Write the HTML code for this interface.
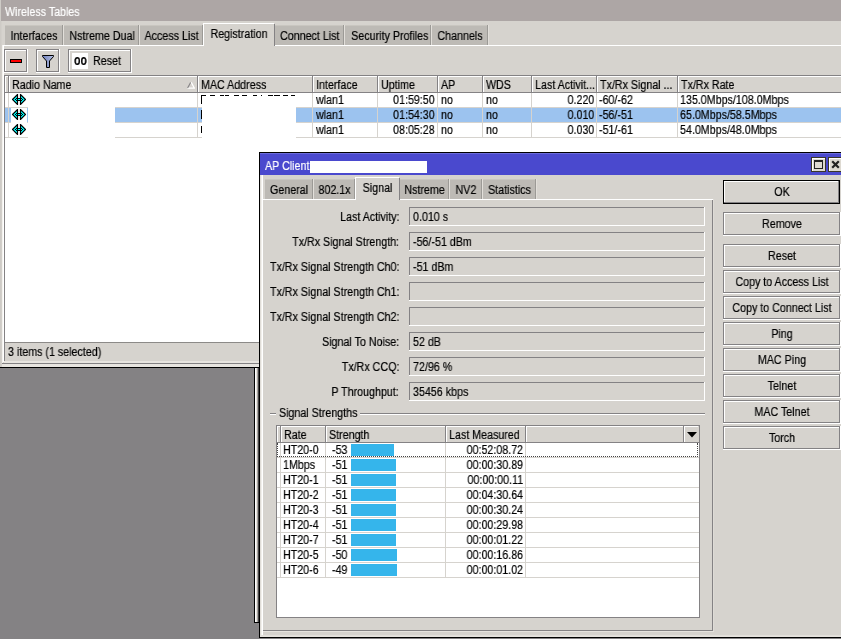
<!DOCTYPE html>
<html><head><meta charset="utf-8"><title>Wireless Tables</title>
<style>
html,body{margin:0;padding:0}
body{width:841px;height:639px;overflow:hidden;background:#848284;position:relative;font-family:"Liberation Sans",sans-serif;}
div,svg{position:absolute;display:block}
.t{will-change:transform;-webkit-text-stroke:0.2px;white-space:pre;line-height:14px;height:14px;font-size:12.5px}
</style></head><body>
<div style="left:0px;top:0px;width:841px;height:366px;background:#D6D3CE;"></div>
<div style="left:1px;top:0px;width:840px;height:21px;background:#ADA6A5;"></div>
<div class="t" style="top:5px;color:#fff;font-size:12.5px;left:5px;transform:scaleX(0.855);transform-origin:0 0;">Wireless Tables</div>
<div style="left:3px;top:45px;width:838px;height:1px;background:#FFFFFF;"></div>
<div style="left:3px;top:45px;width:1px;height:317px;background:#FFFFFF;"></div>
<div style="left:5px;top:25px;width:57px;height:20px;background:#BDBAB5;"></div>
<div style="left:5px;top:25px;width:57px;height:1px;background:#C9C6C0;"></div>
<div style="left:62px;top:25px;width:1px;height:20px;background:#9C9A96;"></div>
<div style="left:63px;top:25px;width:1px;height:20px;background:#E2DFDA;"></div>
<div class="t" style="top:29px;color:#000;font-size:12.5px;left:5px;width:58px;text-align:center;transform:scaleX(0.855);transform-origin:50% 0;">Interfaces</div>
<div style="left:64px;top:25px;width:74px;height:20px;background:#BDBAB5;"></div>
<div style="left:64px;top:25px;width:74px;height:1px;background:#C9C6C0;"></div>
<div style="left:138px;top:25px;width:1px;height:20px;background:#9C9A96;"></div>
<div style="left:139px;top:25px;width:1px;height:20px;background:#E2DFDA;"></div>
<div class="t" style="top:29px;color:#000;font-size:12.5px;left:64px;width:75px;text-align:center;transform:scaleX(0.855);transform-origin:50% 0;">Nstreme Dual</div>
<div style="left:140px;top:25px;width:62px;height:20px;background:#BDBAB5;"></div>
<div style="left:140px;top:25px;width:62px;height:1px;background:#C9C6C0;"></div>
<div style="left:202px;top:25px;width:1px;height:20px;background:#9C9A96;"></div>
<div style="left:203px;top:25px;width:1px;height:20px;background:#E2DFDA;"></div>
<div class="t" style="top:29px;color:#000;font-size:12.5px;left:140px;width:63px;text-align:center;transform:scaleX(0.855);transform-origin:50% 0;">Access List</div>
<div style="left:203px;top:23px;width:72px;height:23px;background:#D6D3CE;"></div>
<div style="left:203px;top:23px;width:71px;height:1px;background:#FFFFFF;"></div>
<div style="left:203px;top:23px;width:1px;height:23px;background:#FFFFFF;"></div>
<div style="left:274px;top:24px;width:1px;height:22px;background:#848284;"></div>
<div class="t" style="top:27px;color:#000;font-size:12.5px;left:203px;width:72px;text-align:center;transform:scaleX(0.855);transform-origin:50% 0;">Registration</div>
<div style="left:275px;top:25px;width:68px;height:20px;background:#BDBAB5;"></div>
<div style="left:275px;top:25px;width:68px;height:1px;background:#C9C6C0;"></div>
<div style="left:343px;top:25px;width:1px;height:20px;background:#9C9A96;"></div>
<div style="left:344px;top:25px;width:1px;height:20px;background:#E2DFDA;"></div>
<div class="t" style="top:29px;color:#000;font-size:12.5px;left:275px;width:69px;text-align:center;transform:scaleX(0.855);transform-origin:50% 0;">Connect List</div>
<div style="left:345px;top:25px;width:85px;height:20px;background:#BDBAB5;"></div>
<div style="left:345px;top:25px;width:85px;height:1px;background:#C9C6C0;"></div>
<div style="left:430px;top:25px;width:1px;height:20px;background:#9C9A96;"></div>
<div style="left:431px;top:25px;width:1px;height:20px;background:#E2DFDA;"></div>
<div class="t" style="top:29px;color:#000;font-size:12.5px;left:345px;width:86px;text-align:center;transform:scaleX(0.855);transform-origin:50% 0;">Security Profiles</div>
<div style="left:432px;top:25px;width:55px;height:20px;background:#BDBAB5;"></div>
<div style="left:432px;top:25px;width:55px;height:1px;background:#C9C6C0;"></div>
<div style="left:487px;top:25px;width:1px;height:20px;background:#9C9A96;"></div>
<div style="left:488px;top:25px;width:1px;height:20px;background:#E2DFDA;"></div>
<div class="t" style="top:29px;color:#000;font-size:12.5px;left:432px;width:56px;text-align:center;transform:scaleX(0.855);transform-origin:50% 0;">Channels</div>
<div style="left:4px;top:49px;width:24px;height:24px;background:#D6D3CE;"></div>
<div style="left:4px;top:72px;width:24px;height:1px;background:#FFFFFF;"></div>
<div style="left:27px;top:49px;width:1px;height:24px;background:#FFFFFF;"></div>
<div style="left:4px;top:49px;width:23px;height:1px;background:#848284;"></div>
<div style="left:4px;top:49px;width:1px;height:23px;background:#848284;"></div>
<div style="left:5px;top:50px;width:21px;height:1px;background:#FFFFFF;"></div>
<div style="left:5px;top:50px;width:1px;height:21px;background:#FFFFFF;"></div>
<div style="left:5px;top:71px;width:22px;height:1px;background:#848284;"></div>
<div style="left:26px;top:50px;width:1px;height:22px;background:#848284;"></div>
<div style="left:10px;top:59px;width:12px;height:4px;background:#000;"></div>
<div style="left:11px;top:60px;width:10px;height:2px;background:#F00;"></div>
<div style="left:36px;top:49px;width:24px;height:24px;background:#D6D3CE;"></div>
<div style="left:36px;top:72px;width:24px;height:1px;background:#FFFFFF;"></div>
<div style="left:59px;top:49px;width:1px;height:24px;background:#FFFFFF;"></div>
<div style="left:36px;top:49px;width:23px;height:1px;background:#848284;"></div>
<div style="left:36px;top:49px;width:1px;height:23px;background:#848284;"></div>
<div style="left:37px;top:50px;width:21px;height:1px;background:#FFFFFF;"></div>
<div style="left:37px;top:50px;width:1px;height:21px;background:#FFFFFF;"></div>
<div style="left:37px;top:71px;width:22px;height:1px;background:#848284;"></div>
<div style="left:58px;top:50px;width:1px;height:22px;background:#848284;"></div>
<svg style="left:41px;top:54px" width="14" height="16" viewBox="0 0 14 16"><defs><linearGradient id="fg" x1="0" x2="1"><stop offset="0" stop-color="#6F80BD"/><stop offset="1" stop-color="#B5C0E2"/></linearGradient></defs><path d="M1.5 1.5 L12.5 1.5 L12.5 2.5 L8.5 7 L8.5 13.5 L5.5 13.5 L5.5 7 L1.5 2.5 Z" fill="url(#fg)" stroke="#000" stroke-width="1"/></svg>
<div style="left:68px;top:49px;width:64px;height:24px;background:#D6D3CE;"></div>
<div style="left:68px;top:72px;width:64px;height:1px;background:#FFFFFF;"></div>
<div style="left:131px;top:49px;width:1px;height:24px;background:#FFFFFF;"></div>
<div style="left:68px;top:49px;width:63px;height:1px;background:#848284;"></div>
<div style="left:68px;top:49px;width:1px;height:23px;background:#848284;"></div>
<div style="left:69px;top:50px;width:61px;height:1px;background:#FFFFFF;"></div>
<div style="left:69px;top:50px;width:1px;height:21px;background:#FFFFFF;"></div>
<div style="left:69px;top:71px;width:62px;height:1px;background:#848284;"></div>
<div style="left:130px;top:50px;width:1px;height:22px;background:#848284;"></div>
<div style="left:72px;top:53px;width:16px;height:16px;background:#FFFFFF;"></div>
<div class="t" style="top:53.3px;color:#000;font-size:14px;font-weight:bold;left:74px;transform:scaleX(0.76);transform-origin:0 0;">oo</div>
<div class="t" style="top:54px;color:#000;font-size:12.5px;left:93px;transform:scaleX(0.855);transform-origin:0 0;">Reset</div>
<div style="left:4px;top:75px;width:837px;height:1px;background:#848284;"></div>
<div style="left:4px;top:75px;width:1px;height:268px;background:#848284;"></div>
<div style="left:5px;top:76px;width:836px;height:267px;background:#FFFFFF;"></div>
<div style="left:5px;top:76px;width:836px;height:16px;background:#D6D3CE;"></div>
<div style="left:5px;top:76px;width:4px;height:16px;background:#D6D3CE;"></div>
<div style="left:5px;top:76px;width:4px;height:1px;background:#FFFFFF;"></div>
<div style="left:5px;top:76px;width:1px;height:16px;background:#FFFFFF;"></div>
<div style="left:8px;top:76px;width:1px;height:16px;background:#848284;"></div>
<div style="left:9px;top:76px;width:189px;height:16px;background:#D6D3CE;"></div>
<div style="left:9px;top:76px;width:189px;height:1px;background:#FFFFFF;"></div>
<div style="left:9px;top:76px;width:1px;height:16px;background:#FFFFFF;"></div>
<div style="left:197px;top:76px;width:1px;height:16px;background:#848284;"></div>
<div class="t" style="top:78px;color:#000;font-size:12.5px;left:12px;transform:scaleX(0.855);transform-origin:0 0;">Radio Name</div>
<div style="left:198px;top:76px;width:115px;height:16px;background:#D6D3CE;"></div>
<div style="left:198px;top:76px;width:115px;height:1px;background:#FFFFFF;"></div>
<div style="left:198px;top:76px;width:1px;height:16px;background:#FFFFFF;"></div>
<div style="left:312px;top:76px;width:1px;height:16px;background:#848284;"></div>
<div class="t" style="top:78px;color:#000;font-size:12.5px;left:201px;transform:scaleX(0.855);transform-origin:0 0;">MAC Address</div>
<div style="left:313px;top:76px;width:65px;height:16px;background:#D6D3CE;"></div>
<div style="left:313px;top:76px;width:65px;height:1px;background:#FFFFFF;"></div>
<div style="left:313px;top:76px;width:1px;height:16px;background:#FFFFFF;"></div>
<div style="left:377px;top:76px;width:1px;height:16px;background:#848284;"></div>
<div class="t" style="top:78px;color:#000;font-size:12.5px;left:316px;transform:scaleX(0.855);transform-origin:0 0;">Interface</div>
<div style="left:378px;top:76px;width:60px;height:16px;background:#D6D3CE;"></div>
<div style="left:378px;top:76px;width:60px;height:1px;background:#FFFFFF;"></div>
<div style="left:378px;top:76px;width:1px;height:16px;background:#FFFFFF;"></div>
<div style="left:437px;top:76px;width:1px;height:16px;background:#848284;"></div>
<div class="t" style="top:78px;color:#000;font-size:12.5px;left:381px;transform:scaleX(0.855);transform-origin:0 0;">Uptime</div>
<div style="left:438px;top:76px;width:45px;height:16px;background:#D6D3CE;"></div>
<div style="left:438px;top:76px;width:45px;height:1px;background:#FFFFFF;"></div>
<div style="left:438px;top:76px;width:1px;height:16px;background:#FFFFFF;"></div>
<div style="left:482px;top:76px;width:1px;height:16px;background:#848284;"></div>
<div class="t" style="top:78px;color:#000;font-size:12.5px;left:441px;transform:scaleX(0.855);transform-origin:0 0;">AP</div>
<div style="left:483px;top:76px;width:49px;height:16px;background:#D6D3CE;"></div>
<div style="left:483px;top:76px;width:49px;height:1px;background:#FFFFFF;"></div>
<div style="left:483px;top:76px;width:1px;height:16px;background:#FFFFFF;"></div>
<div style="left:531px;top:76px;width:1px;height:16px;background:#848284;"></div>
<div class="t" style="top:78px;color:#000;font-size:12.5px;left:486px;transform:scaleX(0.855);transform-origin:0 0;">WDS</div>
<div style="left:532px;top:76px;width:65px;height:16px;background:#D6D3CE;"></div>
<div style="left:532px;top:76px;width:65px;height:1px;background:#FFFFFF;"></div>
<div style="left:532px;top:76px;width:1px;height:16px;background:#FFFFFF;"></div>
<div style="left:596px;top:76px;width:1px;height:16px;background:#848284;"></div>
<div class="t" style="top:78px;color:#000;font-size:12.5px;left:535px;transform:scaleX(0.855);transform-origin:0 0;">Last Activit...</div>
<div style="left:597px;top:76px;width:81px;height:16px;background:#D6D3CE;"></div>
<div style="left:597px;top:76px;width:81px;height:1px;background:#FFFFFF;"></div>
<div style="left:597px;top:76px;width:1px;height:16px;background:#FFFFFF;"></div>
<div style="left:677px;top:76px;width:1px;height:16px;background:#848284;"></div>
<div class="t" style="top:78px;color:#000;font-size:12.5px;left:600px;transform:scaleX(0.855);transform-origin:0 0;">Tx/Rx Signal ...</div>
<div style="left:678px;top:76px;width:164px;height:16px;background:#D6D3CE;"></div>
<div style="left:678px;top:76px;width:164px;height:1px;background:#FFFFFF;"></div>
<div style="left:678px;top:76px;width:1px;height:16px;background:#FFFFFF;"></div>
<div style="left:841px;top:76px;width:1px;height:16px;background:#848284;"></div>
<div class="t" style="top:78px;color:#000;font-size:12.5px;left:681px;transform:scaleX(0.855);transform-origin:0 0;">Tx/Rx Rate</div>
<div style="left:5px;top:92px;width:836px;height:1px;background:#848284;"></div>
<svg style="left:187px;top:82px" width="8" height="7" viewBox="0 0 8 7"><path d="M4.2 0.3 L7.4 6.2 L0.5 6.2" fill="none" stroke="#fff" stroke-width="1.3"/><path d="M0.6 6 L3.6 0.4" fill="none" stroke="#848284" stroke-width="1.1"/></svg>
<div style="left:5px;top:107px;width:836px;height:1px;background:#D6D3CE;"></div>
<div style="left:5px;top:108px;width:836px;height:14px;background:#9CC3EF;"></div>
<div style="left:5px;top:122px;width:836px;height:1px;background:#D6D3CE;"></div>
<div style="left:5px;top:137px;width:836px;height:1px;background:#D6D3CE;"></div>
<div style="left:8px;top:93px;width:1px;height:45px;background:#D6D3CE;"></div>
<div style="left:197px;top:93px;width:1px;height:45px;background:#D6D3CE;"></div>
<div style="left:312px;top:93px;width:1px;height:45px;background:#D6D3CE;"></div>
<div style="left:377px;top:93px;width:1px;height:45px;background:#D6D3CE;"></div>
<div style="left:437px;top:93px;width:1px;height:45px;background:#D6D3CE;"></div>
<div style="left:482px;top:93px;width:1px;height:45px;background:#D6D3CE;"></div>
<div style="left:531px;top:93px;width:1px;height:45px;background:#D6D3CE;"></div>
<div style="left:596px;top:93px;width:1px;height:45px;background:#D6D3CE;"></div>
<div style="left:677px;top:93px;width:1px;height:45px;background:#D6D3CE;"></div>
<svg style="left:12px;top:94px" width="14" height="11" viewBox="0 0 14 11"><path d="M0.5 5.5 L5.5 0.5 L5.5 10.5 Z M13.5 5.5 L8.5 0.5 L8.5 10.5 Z" fill="#00FFFF" stroke="#000" stroke-width="1.15" stroke-linejoin="miter"/><rect x="6" y="5" width="2" height="1" fill="#00FFFF"/><path d="M4 4.5 H10 M4 6.5 H10 M3 5.5 H4 M10 5.5 H11" stroke="#000" stroke-width="1" fill="none"/></svg>
<div class="t" style="top:93px;color:#000;font-size:12.5px;left:316px;transform:scaleX(0.855);transform-origin:0 0;">wlan1</div>
<div class="t" style="top:93px;color:#000;font-size:12.5px;right:406px;transform:scaleX(0.855);transform-origin:100% 0;">01:59:50</div>
<div class="t" style="top:93px;color:#000;font-size:12.5px;left:441px;transform:scaleX(0.855);transform-origin:0 0;">no</div>
<div class="t" style="top:93px;color:#000;font-size:12.5px;left:486px;transform:scaleX(0.855);transform-origin:0 0;">no</div>
<div class="t" style="top:93px;color:#000;font-size:12.5px;right:247px;transform:scaleX(0.855);transform-origin:100% 0;">0.220</div>
<div class="t" style="top:93px;color:#000;font-size:12.5px;left:599px;transform:scaleX(0.855);transform-origin:0 0;">-60/-62</div>
<div class="t" style="top:93px;color:#000;font-size:12.5px;left:680px;transform:scaleX(0.855);transform-origin:0 0;">135.0Mbps/108.0Mbps</div>
<div style="left:11px;top:108px;width:16px;height:15px;background:#FFFFFF;"></div>
<svg style="left:12px;top:109px" width="14" height="11" viewBox="0 0 14 11"><path d="M0.5 5.5 L5.5 0.5 L5.5 10.5 Z M13.5 5.5 L8.5 0.5 L8.5 10.5 Z" fill="#00FFFF" stroke="#000" stroke-width="1.15" stroke-linejoin="miter"/><rect x="6" y="5" width="2" height="1" fill="#00FFFF"/><path d="M4 4.5 H10 M4 6.5 H10 M3 5.5 H4 M10 5.5 H11" stroke="#000" stroke-width="1" fill="none"/></svg>
<div class="t" style="top:108px;color:#000;font-size:12.5px;left:316px;transform:scaleX(0.855);transform-origin:0 0;">wlan1</div>
<div class="t" style="top:108px;color:#000;font-size:12.5px;right:406px;transform:scaleX(0.855);transform-origin:100% 0;">01:54:30</div>
<div class="t" style="top:108px;color:#000;font-size:12.5px;left:441px;transform:scaleX(0.855);transform-origin:0 0;">no</div>
<div class="t" style="top:108px;color:#000;font-size:12.5px;left:486px;transform:scaleX(0.855);transform-origin:0 0;">no</div>
<div class="t" style="top:108px;color:#000;font-size:12.5px;right:247px;transform:scaleX(0.855);transform-origin:100% 0;">0.010</div>
<div class="t" style="top:108px;color:#000;font-size:12.5px;left:599px;transform:scaleX(0.855);transform-origin:0 0;">-56/-51</div>
<div class="t" style="top:108px;color:#000;font-size:12.5px;left:680px;transform:scaleX(0.855);transform-origin:0 0;">65.0Mbps/58.5Mbps</div>
<svg style="left:12px;top:124px" width="14" height="11" viewBox="0 0 14 11"><path d="M0.5 5.5 L5.5 0.5 L5.5 10.5 Z M13.5 5.5 L8.5 0.5 L8.5 10.5 Z" fill="#00FFFF" stroke="#000" stroke-width="1.15" stroke-linejoin="miter"/><rect x="6" y="5" width="2" height="1" fill="#00FFFF"/><path d="M4 4.5 H10 M4 6.5 H10 M3 5.5 H4 M10 5.5 H11" stroke="#000" stroke-width="1" fill="none"/></svg>
<div class="t" style="top:123px;color:#000;font-size:12.5px;left:316px;transform:scaleX(0.855);transform-origin:0 0;">wlan1</div>
<div class="t" style="top:123px;color:#000;font-size:12.5px;right:406px;transform:scaleX(0.855);transform-origin:100% 0;">08:05:28</div>
<div class="t" style="top:123px;color:#000;font-size:12.5px;left:441px;transform:scaleX(0.855);transform-origin:0 0;">no</div>
<div class="t" style="top:123px;color:#000;font-size:12.5px;left:486px;transform:scaleX(0.855);transform-origin:0 0;">no</div>
<div class="t" style="top:123px;color:#000;font-size:12.5px;right:247px;transform:scaleX(0.855);transform-origin:100% 0;">0.030</div>
<div class="t" style="top:123px;color:#000;font-size:12.5px;left:599px;transform:scaleX(0.855);transform-origin:0 0;">-51/-61</div>
<div class="t" style="top:123px;color:#000;font-size:12.5px;left:680px;transform:scaleX(0.855);transform-origin:0 0;">54.0Mbps/48.0Mbps</div>
<div style="left:28px;top:93px;width:87px;height:45px;background:#FFFFFF;"></div>
<div style="left:202px;top:97px;width:94px;height:41px;background:#FFFFFF;"></div>
<div style="left:198px;top:93px;width:98px;height:4px;background:#FFFFFF;"></div>
<div style="left:201px;top:95px;width:1px;height:9px;background:#000;"></div>
<div style="left:201px;top:110px;width:1px;height:9px;background:#000;"></div>
<div style="left:201px;top:126px;width:1px;height:7px;background:#000;"></div>
<div style="left:201px;top:95px;width:5px;height:1px;background:#000;"></div>
<div style="left:210px;top:95px;width:5px;height:1px;background:#000;"></div>
<div style="left:220px;top:95px;width:4px;height:1px;background:#000;"></div>
<div style="left:225px;top:95px;width:4px;height:1px;background:#000;"></div>
<div style="left:234px;top:95px;width:5px;height:1px;background:#000;"></div>
<div style="left:242px;top:95px;width:5px;height:1px;background:#000;"></div>
<div style="left:253px;top:95px;width:4px;height:1px;background:#000;"></div>
<div style="left:261px;top:95px;width:1px;height:1px;background:#000;"></div>
<div style="left:268px;top:95px;width:5px;height:1px;background:#000;"></div>
<div style="left:274px;top:95px;width:6px;height:1px;background:#000;"></div>
<div style="left:283px;top:95px;width:5px;height:1px;background:#000;"></div>
<div style="left:291px;top:95px;width:4px;height:1px;background:#000;"></div>
<div style="left:5px;top:342px;width:254px;height:1px;background:#8C8A88;"></div>
<div class="t" style="top:345px;color:#000;font-size:12.5px;left:8px;transform:scaleX(0.855);transform-origin:0 0;">3 items (1 selected)</div>
<div style="left:4px;top:343px;width:1px;height:20px;background:#848284;"></div>
<div style="left:4px;top:361px;width:255px;height:1px;background:#E8E5E0;"></div>
<div style="left:4px;top:362px;width:255px;height:1px;background:#E8E5E0;"></div>
<div style="left:0px;top:363px;width:259px;height:1px;background:#848284;"></div>
<div style="left:0px;top:364px;width:259px;height:1px;background:#E8E5E0;"></div>
<div style="left:0px;top:365px;width:259px;height:1px;background:#E8E5E0;"></div>
<div style="left:0px;top:366px;width:259px;height:1px;background:#E8E5E0;"></div>
<div style="left:0px;top:367px;width:259px;height:272px;background:#848284;"></div>
<div style="left:0px;top:367px;width:259px;height:1px;background:#000;"></div>
<div style="left:2px;top:45px;width:1px;height:318px;background:#F4F2EE;"></div>
<div style="left:0px;top:0px;width:1px;height:367px;background:#CECBC6;"></div>
<div style="left:1px;top:21px;width:1px;height:346px;background:#D2CFCA;"></div>
<div style="left:254px;top:368px;width:1px;height:255px;background:#000;"></div>
<div style="left:255px;top:368px;width:1px;height:254px;background:#FFF;"></div>
<div style="left:256px;top:368px;width:1px;height:254px;background:#E6E3DE;"></div>
<div style="left:257px;top:368px;width:1px;height:254px;background:#A5A2A0;"></div>
<div style="left:258px;top:368px;width:1px;height:254px;background:#424142;"></div>
<div style="left:254px;top:622px;width:5px;height:1px;background:#000;"></div>
<div style="left:259px;top:152px;width:582px;height:486px;background:#000;"></div>
<div style="left:260px;top:153px;width:581px;height:484px;background:#D6D3CE;"></div>
<div style="left:260px;top:153px;width:1px;height:484px;background:#E0DDD8;"></div>
<div style="left:261px;top:153px;width:1px;height:484px;background:#F2F0EC;"></div>
<div style="left:262px;top:175px;width:1px;height:462px;background:#FFFFFF;"></div>
<div style="left:260px;top:153px;width:581px;height:22px;background:#4A49CE;"></div>
<div style="left:260px;top:153px;width:581px;height:1px;background:#6B6BDB;"></div>
<div class="t" style="top:159px;color:#fff;font-size:12.5px;left:265px;transform:scaleX(0.855);transform-origin:0 0;">AP Client</div>
<div style="left:310px;top:161px;width:117px;height:12px;background:#FFFFFF;"></div>
<div style="left:811px;top:157px;width:15px;height:15px;background:#3A3728;"></div>
<div style="left:812px;top:158px;width:13px;height:13px;background:#DEDAD2;"></div>
<div style="left:812px;top:158px;width:13px;height:1px;background:#FFFFFF;"></div>
<div style="left:812px;top:158px;width:1px;height:13px;background:#FFFFFF;"></div>
<div style="left:814px;top:160px;width:9px;height:9px;border:1px solid #222;border-top:2px solid #222;box-sizing:border-box;"></div>
<div style="left:828px;top:157px;width:15px;height:15px;background:#3A3728;"></div>
<div style="left:829px;top:158px;width:13px;height:13px;background:#DEDAD2;"></div>
<div style="left:829px;top:158px;width:13px;height:1px;background:#FFFFFF;"></div>
<div style="left:829px;top:158px;width:1px;height:13px;background:#FFFFFF;"></div>
<svg style="left:831px;top:160px" width="9" height="9" viewBox="0 0 9 9"><path d="M1.2 1.2 L7.8 7.8 M7.8 1.2 L1.2 7.8" stroke="#222" stroke-width="2.2"/></svg>
<div style="left:263px;top:199px;width:450px;height:1px;background:#FFFFFF;"></div>
<div style="left:712px;top:200px;width:1px;height:431px;background:#848284;"></div>
<div style="left:713px;top:199px;width:1px;height:433px;background:#DEDBD6;"></div>
<div style="left:263px;top:630px;width:450px;height:1px;background:#848284;"></div>
<div style="left:263px;top:631px;width:451px;height:1px;background:#E6E3DE;"></div>
<div style="left:260px;top:635px;width:581px;height:1px;background:#E2DFDA;"></div>
<div style="left:260px;top:636px;width:581px;height:1px;background:#E6E3DE;"></div>
<div style="left:265px;top:179px;width:47px;height:20px;background:#BDBAB5;"></div>
<div style="left:265px;top:179px;width:47px;height:1px;background:#C9C6C0;"></div>
<div style="left:312px;top:179px;width:1px;height:20px;background:#9C9A96;"></div>
<div style="left:313px;top:179px;width:1px;height:20px;background:#E2DFDA;"></div>
<div class="t" style="top:183px;color:#000;font-size:12.5px;left:265px;width:48px;text-align:center;transform:scaleX(0.855);transform-origin:50% 0;">General</div>
<div style="left:314px;top:179px;width:40px;height:20px;background:#BDBAB5;"></div>
<div style="left:314px;top:179px;width:40px;height:1px;background:#C9C6C0;"></div>
<div style="left:354px;top:179px;width:1px;height:20px;background:#9C9A96;"></div>
<div style="left:355px;top:179px;width:1px;height:20px;background:#E2DFDA;"></div>
<div class="t" style="top:183px;color:#000;font-size:12.5px;left:314px;width:41px;text-align:center;transform:scaleX(0.855);transform-origin:50% 0;">802.1x</div>
<div style="left:355px;top:177px;width:45px;height:23px;background:#D6D3CE;"></div>
<div style="left:355px;top:177px;width:44px;height:1px;background:#FFFFFF;"></div>
<div style="left:355px;top:177px;width:1px;height:23px;background:#FFFFFF;"></div>
<div style="left:399px;top:178px;width:1px;height:22px;background:#848284;"></div>
<div class="t" style="top:181px;color:#000;font-size:12.5px;left:355px;width:45px;text-align:center;transform:scaleX(0.855);transform-origin:50% 0;">Signal</div>
<div style="left:400px;top:179px;width:48px;height:20px;background:#BDBAB5;"></div>
<div style="left:400px;top:179px;width:48px;height:1px;background:#C9C6C0;"></div>
<div style="left:448px;top:179px;width:1px;height:20px;background:#9C9A96;"></div>
<div style="left:449px;top:179px;width:1px;height:20px;background:#E2DFDA;"></div>
<div class="t" style="top:183px;color:#000;font-size:12.5px;left:400px;width:49px;text-align:center;transform:scaleX(0.855);transform-origin:50% 0;">Nstreme</div>
<div style="left:450px;top:179px;width:31px;height:20px;background:#BDBAB5;"></div>
<div style="left:450px;top:179px;width:31px;height:1px;background:#C9C6C0;"></div>
<div style="left:481px;top:179px;width:1px;height:20px;background:#9C9A96;"></div>
<div style="left:482px;top:179px;width:1px;height:20px;background:#E2DFDA;"></div>
<div class="t" style="top:183px;color:#000;font-size:12.5px;left:450px;width:32px;text-align:center;transform:scaleX(0.855);transform-origin:50% 0;">NV2</div>
<div style="left:483px;top:179px;width:52px;height:20px;background:#BDBAB5;"></div>
<div style="left:483px;top:179px;width:52px;height:1px;background:#C9C6C0;"></div>
<div style="left:535px;top:179px;width:1px;height:20px;background:#9C9A96;"></div>
<div style="left:536px;top:179px;width:1px;height:20px;background:#E2DFDA;"></div>
<div class="t" style="top:183px;color:#000;font-size:12.5px;left:483px;width:53px;text-align:center;transform:scaleX(0.855);transform-origin:50% 0;">Statistics</div>
<div class="t" style="top:210px;color:#000;font-size:12.5px;right:442px;transform:scaleX(0.855);transform-origin:100% 0;">Last Activity:</div>
<div style="left:409px;top:207px;width:295px;height:1px;background:#848284;"></div>
<div style="left:409px;top:207px;width:1px;height:18px;background:#848284;"></div>
<div style="left:409px;top:225px;width:296px;height:1px;background:#FFFFFF;"></div>
<div style="left:704px;top:207px;width:1px;height:19px;background:#FFFFFF;"></div>
<div class="t" style="top:210px;color:#000;font-size:12.5px;left:413px;transform:scaleX(0.855);transform-origin:0 0;">0.010 s</div>
<div class="t" style="top:235px;color:#000;font-size:12.5px;right:442px;transform:scaleX(0.855);transform-origin:100% 0;">Tx/Rx Signal Strength:</div>
<div style="left:409px;top:232px;width:295px;height:1px;background:#848284;"></div>
<div style="left:409px;top:232px;width:1px;height:18px;background:#848284;"></div>
<div style="left:409px;top:250px;width:296px;height:1px;background:#FFFFFF;"></div>
<div style="left:704px;top:232px;width:1px;height:19px;background:#FFFFFF;"></div>
<div class="t" style="top:235px;color:#000;font-size:12.5px;left:413px;transform:scaleX(0.855);transform-origin:0 0;">-56/-51 dBm</div>
<div class="t" style="top:260px;color:#000;font-size:12.5px;right:442px;transform:scaleX(0.855);transform-origin:100% 0;">Tx/Rx Signal Strength Ch0:</div>
<div style="left:409px;top:257px;width:295px;height:1px;background:#848284;"></div>
<div style="left:409px;top:257px;width:1px;height:18px;background:#848284;"></div>
<div style="left:409px;top:275px;width:296px;height:1px;background:#FFFFFF;"></div>
<div style="left:704px;top:257px;width:1px;height:19px;background:#FFFFFF;"></div>
<div class="t" style="top:260px;color:#000;font-size:12.5px;left:413px;transform:scaleX(0.855);transform-origin:0 0;">-51 dBm</div>
<div class="t" style="top:285px;color:#000;font-size:12.5px;right:442px;transform:scaleX(0.855);transform-origin:100% 0;">Tx/Rx Signal Strength Ch1:</div>
<div style="left:409px;top:282px;width:295px;height:1px;background:#848284;"></div>
<div style="left:409px;top:282px;width:1px;height:18px;background:#848284;"></div>
<div style="left:409px;top:300px;width:296px;height:1px;background:#FFFFFF;"></div>
<div style="left:704px;top:282px;width:1px;height:19px;background:#FFFFFF;"></div>
<div class="t" style="top:310px;color:#000;font-size:12.5px;right:442px;transform:scaleX(0.855);transform-origin:100% 0;">Tx/Rx Signal Strength Ch2:</div>
<div style="left:409px;top:307px;width:295px;height:1px;background:#848284;"></div>
<div style="left:409px;top:307px;width:1px;height:18px;background:#848284;"></div>
<div style="left:409px;top:325px;width:296px;height:1px;background:#FFFFFF;"></div>
<div style="left:704px;top:307px;width:1px;height:19px;background:#FFFFFF;"></div>
<div class="t" style="top:335px;color:#000;font-size:12.5px;right:442px;transform:scaleX(0.855);transform-origin:100% 0;">Signal To Noise:</div>
<div style="left:409px;top:332px;width:295px;height:1px;background:#848284;"></div>
<div style="left:409px;top:332px;width:1px;height:18px;background:#848284;"></div>
<div style="left:409px;top:350px;width:296px;height:1px;background:#FFFFFF;"></div>
<div style="left:704px;top:332px;width:1px;height:19px;background:#FFFFFF;"></div>
<div class="t" style="top:335px;color:#000;font-size:12.5px;left:413px;transform:scaleX(0.855);transform-origin:0 0;">52 dB</div>
<div class="t" style="top:360px;color:#000;font-size:12.5px;right:442px;transform:scaleX(0.855);transform-origin:100% 0;">Tx/Rx CCQ:</div>
<div style="left:409px;top:357px;width:295px;height:1px;background:#848284;"></div>
<div style="left:409px;top:357px;width:1px;height:18px;background:#848284;"></div>
<div style="left:409px;top:375px;width:296px;height:1px;background:#FFFFFF;"></div>
<div style="left:704px;top:357px;width:1px;height:19px;background:#FFFFFF;"></div>
<div class="t" style="top:360px;color:#000;font-size:12.5px;left:413px;transform:scaleX(0.855);transform-origin:0 0;">72/96 %</div>
<div class="t" style="top:385px;color:#000;font-size:12.5px;right:442px;transform:scaleX(0.855);transform-origin:100% 0;">P Throughput:</div>
<div style="left:409px;top:382px;width:295px;height:1px;background:#848284;"></div>
<div style="left:409px;top:382px;width:1px;height:18px;background:#848284;"></div>
<div style="left:409px;top:400px;width:296px;height:1px;background:#FFFFFF;"></div>
<div style="left:704px;top:382px;width:1px;height:19px;background:#FFFFFF;"></div>
<div class="t" style="top:385px;color:#000;font-size:12.5px;left:413px;transform:scaleX(0.855);transform-origin:0 0;">35456 kbps</div>
<div style="left:270px;top:413px;width:6px;height:1px;background:#848284;"></div>
<div style="left:270px;top:414px;width:6px;height:1px;background:#FFFFFF;"></div>
<div style="left:360px;top:413px;width:345px;height:1px;background:#848284;"></div>
<div style="left:360px;top:414px;width:345px;height:1px;background:#FFFFFF;"></div>
<div class="t" style="top:406px;color:#000;font-size:12.5px;left:279px;transform:scaleX(0.855);transform-origin:0 0;">Signal Strengths</div>
<div style="left:276px;top:425px;width:424px;height:193px;background:#848284;"></div>
<div style="left:277px;top:426px;width:422px;height:191px;background:#FFFFFF;"></div>
<div style="left:277px;top:426px;width:422px;height:16px;background:#D6D3CE;"></div>
<div style="left:277px;top:426px;width:4px;height:16px;background:#D6D3CE;"></div>
<div style="left:277px;top:426px;width:4px;height:1px;background:#FFFFFF;"></div>
<div style="left:277px;top:426px;width:1px;height:16px;background:#FFFFFF;"></div>
<div style="left:280px;top:426px;width:1px;height:16px;background:#848284;"></div>
<div style="left:281px;top:426px;width:45px;height:16px;background:#D6D3CE;"></div>
<div style="left:281px;top:426px;width:45px;height:1px;background:#FFFFFF;"></div>
<div style="left:281px;top:426px;width:1px;height:16px;background:#FFFFFF;"></div>
<div style="left:325px;top:426px;width:1px;height:16px;background:#848284;"></div>
<div class="t" style="top:428px;color:#000;font-size:12.5px;left:284px;transform:scaleX(0.855);transform-origin:0 0;">Rate</div>
<div style="left:326px;top:426px;width:120px;height:16px;background:#D6D3CE;"></div>
<div style="left:326px;top:426px;width:120px;height:1px;background:#FFFFFF;"></div>
<div style="left:326px;top:426px;width:1px;height:16px;background:#FFFFFF;"></div>
<div style="left:445px;top:426px;width:1px;height:16px;background:#848284;"></div>
<div class="t" style="top:428px;color:#000;font-size:12.5px;left:329px;transform:scaleX(0.855);transform-origin:0 0;">Strength</div>
<div style="left:446px;top:426px;width:80px;height:16px;background:#D6D3CE;"></div>
<div style="left:446px;top:426px;width:80px;height:1px;background:#FFFFFF;"></div>
<div style="left:446px;top:426px;width:1px;height:16px;background:#FFFFFF;"></div>
<div style="left:525px;top:426px;width:1px;height:16px;background:#848284;"></div>
<div class="t" style="top:428px;color:#000;font-size:12.5px;left:449px;transform:scaleX(0.855);transform-origin:0 0;">Last Measured</div>
<div style="left:526px;top:426px;width:158px;height:16px;background:#D6D3CE;"></div>
<div style="left:526px;top:426px;width:158px;height:1px;background:#FFFFFF;"></div>
<div style="left:526px;top:426px;width:1px;height:16px;background:#FFFFFF;"></div>
<div style="left:683px;top:426px;width:1px;height:16px;background:#848284;"></div>
<div style="left:684px;top:426px;width:15px;height:16px;background:#D6D3CE;"></div>
<div style="left:684px;top:426px;width:15px;height:1px;background:#FFFFFF;"></div>
<div style="left:684px;top:426px;width:1px;height:16px;background:#FFFFFF;"></div>
<div style="left:698px;top:426px;width:1px;height:16px;background:#848284;"></div>
<div style="left:698px;top:426px;width:1px;height:16px;background:#D6D3CE;"></div>
<svg style="left:687px;top:432px" width="10" height="6" viewBox="0 0 10 6"><path d="M0 0 L10 0 L5 5.5 Z" fill="#000"/></svg>
<div style="left:277px;top:442px;width:422px;height:1px;background:#848284;"></div>
<div style="left:277px;top:457px;width:422px;height:1px;background:#D6D3CE;"></div>
<div style="left:277px;top:472px;width:422px;height:1px;background:#D6D3CE;"></div>
<div style="left:277px;top:487px;width:422px;height:1px;background:#D6D3CE;"></div>
<div style="left:277px;top:502px;width:422px;height:1px;background:#D6D3CE;"></div>
<div style="left:277px;top:517px;width:422px;height:1px;background:#D6D3CE;"></div>
<div style="left:277px;top:532px;width:422px;height:1px;background:#D6D3CE;"></div>
<div style="left:277px;top:547px;width:422px;height:1px;background:#D6D3CE;"></div>
<div style="left:277px;top:562px;width:422px;height:1px;background:#D6D3CE;"></div>
<div style="left:277px;top:577px;width:422px;height:1px;background:#D6D3CE;"></div>
<div style="left:280px;top:443px;width:1px;height:135px;background:#D6D3CE;"></div>
<div style="left:325px;top:443px;width:1px;height:135px;background:#D6D3CE;"></div>
<div style="left:445px;top:443px;width:1px;height:135px;background:#D6D3CE;"></div>
<div style="left:525px;top:443px;width:1px;height:135px;background:#D6D3CE;"></div>
<div class="t" style="top:443px;color:#000;font-size:12.5px;left:283px;transform:scaleX(0.855);transform-origin:0 0;">HT20-0</div>
<div class="t" style="top:443px;color:#000;font-size:12.5px;left:332px;transform:scaleX(0.855);transform-origin:0 0;">-53</div>
<div style="left:351px;top:444px;width:43px;height:12px;background:#35B5EB;"></div>
<div class="t" style="top:443px;color:#000;font-size:12.5px;right:318px;transform:scaleX(0.855);transform-origin:100% 0;">00:52:08.72</div>
<div class="t" style="top:458px;color:#000;font-size:12.5px;left:283px;transform:scaleX(0.855);transform-origin:0 0;">1Mbps</div>
<div class="t" style="top:458px;color:#000;font-size:12.5px;left:332px;transform:scaleX(0.855);transform-origin:0 0;">-51</div>
<div style="left:351px;top:459px;width:45px;height:12px;background:#35B5EB;"></div>
<div class="t" style="top:458px;color:#000;font-size:12.5px;right:318px;transform:scaleX(0.855);transform-origin:100% 0;">00:00:30.89</div>
<div class="t" style="top:473px;color:#000;font-size:12.5px;left:283px;transform:scaleX(0.855);transform-origin:0 0;">HT20-1</div>
<div class="t" style="top:473px;color:#000;font-size:12.5px;left:332px;transform:scaleX(0.855);transform-origin:0 0;">-51</div>
<div style="left:351px;top:474px;width:45px;height:12px;background:#35B5EB;"></div>
<div class="t" style="top:473px;color:#000;font-size:12.5px;right:318px;transform:scaleX(0.855);transform-origin:100% 0;">00:00:00.11</div>
<div class="t" style="top:488px;color:#000;font-size:12.5px;left:283px;transform:scaleX(0.855);transform-origin:0 0;">HT20-2</div>
<div class="t" style="top:488px;color:#000;font-size:12.5px;left:332px;transform:scaleX(0.855);transform-origin:0 0;">-51</div>
<div style="left:351px;top:489px;width:45px;height:12px;background:#35B5EB;"></div>
<div class="t" style="top:488px;color:#000;font-size:12.5px;right:318px;transform:scaleX(0.855);transform-origin:100% 0;">00:04:30.64</div>
<div class="t" style="top:503px;color:#000;font-size:12.5px;left:283px;transform:scaleX(0.855);transform-origin:0 0;">HT20-3</div>
<div class="t" style="top:503px;color:#000;font-size:12.5px;left:332px;transform:scaleX(0.855);transform-origin:0 0;">-51</div>
<div style="left:351px;top:504px;width:45px;height:12px;background:#35B5EB;"></div>
<div class="t" style="top:503px;color:#000;font-size:12.5px;right:318px;transform:scaleX(0.855);transform-origin:100% 0;">00:00:30.24</div>
<div class="t" style="top:518px;color:#000;font-size:12.5px;left:283px;transform:scaleX(0.855);transform-origin:0 0;">HT20-4</div>
<div class="t" style="top:518px;color:#000;font-size:12.5px;left:332px;transform:scaleX(0.855);transform-origin:0 0;">-51</div>
<div style="left:351px;top:519px;width:45px;height:12px;background:#35B5EB;"></div>
<div class="t" style="top:518px;color:#000;font-size:12.5px;right:318px;transform:scaleX(0.855);transform-origin:100% 0;">00:00:29.98</div>
<div class="t" style="top:533px;color:#000;font-size:12.5px;left:283px;transform:scaleX(0.855);transform-origin:0 0;">HT20-7</div>
<div class="t" style="top:533px;color:#000;font-size:12.5px;left:332px;transform:scaleX(0.855);transform-origin:0 0;">-51</div>
<div style="left:351px;top:534px;width:45px;height:12px;background:#35B5EB;"></div>
<div class="t" style="top:533px;color:#000;font-size:12.5px;right:318px;transform:scaleX(0.855);transform-origin:100% 0;">00:00:01.22</div>
<div class="t" style="top:548px;color:#000;font-size:12.5px;left:283px;transform:scaleX(0.855);transform-origin:0 0;">HT20-5</div>
<div class="t" style="top:548px;color:#000;font-size:12.5px;left:332px;transform:scaleX(0.855);transform-origin:0 0;">-50</div>
<div style="left:351px;top:549px;width:46px;height:12px;background:#35B5EB;"></div>
<div class="t" style="top:548px;color:#000;font-size:12.5px;right:318px;transform:scaleX(0.855);transform-origin:100% 0;">00:00:16.86</div>
<div class="t" style="top:563px;color:#000;font-size:12.5px;left:283px;transform:scaleX(0.855);transform-origin:0 0;">HT20-6</div>
<div class="t" style="top:563px;color:#000;font-size:12.5px;left:332px;transform:scaleX(0.855);transform-origin:0 0;">-49</div>
<div style="left:351px;top:564px;width:46px;height:12px;background:#35B5EB;"></div>
<div class="t" style="top:563px;color:#000;font-size:12.5px;right:318px;transform:scaleX(0.855);transform-origin:100% 0;">00:00:01.02</div>
<div style="left:277px;top:443px;width:421px;height:14px;border:1px dotted #444;border-top:none;box-sizing:border-box;"></div>
<div style="left:723px;top:180px;width:117px;height:24px;background:#000;"></div>
<div style="left:724px;top:181px;width:115px;height:22px;background:#D6D3CE;"></div>
<div style="left:724px;top:181px;width:115px;height:1px;background:#FFFFFF;"></div>
<div style="left:724px;top:181px;width:1px;height:22px;background:#FFFFFF;"></div>
<div style="left:724px;top:202px;width:115px;height:1px;background:#848284;"></div>
<div style="left:838px;top:181px;width:1px;height:22px;background:#848284;"></div>
<div class="t" style="top:185px;color:#000;font-size:12.5px;left:723px;width:118px;text-align:center;transform:scaleX(0.855);transform-origin:50% 0;">OK</div>
<div style="left:723px;top:212px;width:118px;height:24px;background:#D6D3CE;"></div>
<div style="left:723px;top:235px;width:118px;height:1px;background:#FFFFFF;"></div>
<div style="left:840px;top:212px;width:1px;height:24px;background:#FFFFFF;"></div>
<div style="left:723px;top:212px;width:117px;height:1px;background:#848284;"></div>
<div style="left:723px;top:212px;width:1px;height:23px;background:#848284;"></div>
<div style="left:724px;top:213px;width:115px;height:1px;background:#FFFFFF;"></div>
<div style="left:724px;top:213px;width:1px;height:21px;background:#FFFFFF;"></div>
<div style="left:724px;top:234px;width:116px;height:1px;background:#848284;"></div>
<div style="left:839px;top:213px;width:1px;height:22px;background:#848284;"></div>
<div class="t" style="top:217px;color:#000;font-size:12.5px;left:723px;width:118px;text-align:center;transform:scaleX(0.855);transform-origin:50% 0;">Remove</div>
<div style="left:723px;top:244px;width:118px;height:24px;background:#D6D3CE;"></div>
<div style="left:723px;top:267px;width:118px;height:1px;background:#FFFFFF;"></div>
<div style="left:840px;top:244px;width:1px;height:24px;background:#FFFFFF;"></div>
<div style="left:723px;top:244px;width:117px;height:1px;background:#848284;"></div>
<div style="left:723px;top:244px;width:1px;height:23px;background:#848284;"></div>
<div style="left:724px;top:245px;width:115px;height:1px;background:#FFFFFF;"></div>
<div style="left:724px;top:245px;width:1px;height:21px;background:#FFFFFF;"></div>
<div style="left:724px;top:266px;width:116px;height:1px;background:#848284;"></div>
<div style="left:839px;top:245px;width:1px;height:22px;background:#848284;"></div>
<div class="t" style="top:249px;color:#000;font-size:12.5px;left:723px;width:118px;text-align:center;transform:scaleX(0.855);transform-origin:50% 0;">Reset</div>
<div style="left:723px;top:270px;width:118px;height:24px;background:#D6D3CE;"></div>
<div style="left:723px;top:293px;width:118px;height:1px;background:#FFFFFF;"></div>
<div style="left:840px;top:270px;width:1px;height:24px;background:#FFFFFF;"></div>
<div style="left:723px;top:270px;width:117px;height:1px;background:#848284;"></div>
<div style="left:723px;top:270px;width:1px;height:23px;background:#848284;"></div>
<div style="left:724px;top:271px;width:115px;height:1px;background:#FFFFFF;"></div>
<div style="left:724px;top:271px;width:1px;height:21px;background:#FFFFFF;"></div>
<div style="left:724px;top:292px;width:116px;height:1px;background:#848284;"></div>
<div style="left:839px;top:271px;width:1px;height:22px;background:#848284;"></div>
<div class="t" style="top:275px;color:#000;font-size:12.5px;left:723px;width:118px;text-align:center;transform:scaleX(0.855);transform-origin:50% 0;">Copy to Access List</div>
<div style="left:723px;top:296px;width:118px;height:24px;background:#D6D3CE;"></div>
<div style="left:723px;top:319px;width:118px;height:1px;background:#FFFFFF;"></div>
<div style="left:840px;top:296px;width:1px;height:24px;background:#FFFFFF;"></div>
<div style="left:723px;top:296px;width:117px;height:1px;background:#848284;"></div>
<div style="left:723px;top:296px;width:1px;height:23px;background:#848284;"></div>
<div style="left:724px;top:297px;width:115px;height:1px;background:#FFFFFF;"></div>
<div style="left:724px;top:297px;width:1px;height:21px;background:#FFFFFF;"></div>
<div style="left:724px;top:318px;width:116px;height:1px;background:#848284;"></div>
<div style="left:839px;top:297px;width:1px;height:22px;background:#848284;"></div>
<div class="t" style="top:301px;color:#000;font-size:12.5px;left:723px;width:118px;text-align:center;transform:scaleX(0.855);transform-origin:50% 0;">Copy to Connect List</div>
<div style="left:723px;top:322px;width:118px;height:24px;background:#D6D3CE;"></div>
<div style="left:723px;top:345px;width:118px;height:1px;background:#FFFFFF;"></div>
<div style="left:840px;top:322px;width:1px;height:24px;background:#FFFFFF;"></div>
<div style="left:723px;top:322px;width:117px;height:1px;background:#848284;"></div>
<div style="left:723px;top:322px;width:1px;height:23px;background:#848284;"></div>
<div style="left:724px;top:323px;width:115px;height:1px;background:#FFFFFF;"></div>
<div style="left:724px;top:323px;width:1px;height:21px;background:#FFFFFF;"></div>
<div style="left:724px;top:344px;width:116px;height:1px;background:#848284;"></div>
<div style="left:839px;top:323px;width:1px;height:22px;background:#848284;"></div>
<div class="t" style="top:327px;color:#000;font-size:12.5px;left:723px;width:118px;text-align:center;transform:scaleX(0.855);transform-origin:50% 0;">Ping</div>
<div style="left:723px;top:348px;width:118px;height:24px;background:#D6D3CE;"></div>
<div style="left:723px;top:371px;width:118px;height:1px;background:#FFFFFF;"></div>
<div style="left:840px;top:348px;width:1px;height:24px;background:#FFFFFF;"></div>
<div style="left:723px;top:348px;width:117px;height:1px;background:#848284;"></div>
<div style="left:723px;top:348px;width:1px;height:23px;background:#848284;"></div>
<div style="left:724px;top:349px;width:115px;height:1px;background:#FFFFFF;"></div>
<div style="left:724px;top:349px;width:1px;height:21px;background:#FFFFFF;"></div>
<div style="left:724px;top:370px;width:116px;height:1px;background:#848284;"></div>
<div style="left:839px;top:349px;width:1px;height:22px;background:#848284;"></div>
<div class="t" style="top:353px;color:#000;font-size:12.5px;left:723px;width:118px;text-align:center;transform:scaleX(0.855);transform-origin:50% 0;">MAC Ping</div>
<div style="left:723px;top:374px;width:118px;height:24px;background:#D6D3CE;"></div>
<div style="left:723px;top:397px;width:118px;height:1px;background:#FFFFFF;"></div>
<div style="left:840px;top:374px;width:1px;height:24px;background:#FFFFFF;"></div>
<div style="left:723px;top:374px;width:117px;height:1px;background:#848284;"></div>
<div style="left:723px;top:374px;width:1px;height:23px;background:#848284;"></div>
<div style="left:724px;top:375px;width:115px;height:1px;background:#FFFFFF;"></div>
<div style="left:724px;top:375px;width:1px;height:21px;background:#FFFFFF;"></div>
<div style="left:724px;top:396px;width:116px;height:1px;background:#848284;"></div>
<div style="left:839px;top:375px;width:1px;height:22px;background:#848284;"></div>
<div class="t" style="top:379px;color:#000;font-size:12.5px;left:723px;width:118px;text-align:center;transform:scaleX(0.855);transform-origin:50% 0;">Telnet</div>
<div style="left:723px;top:400px;width:118px;height:24px;background:#D6D3CE;"></div>
<div style="left:723px;top:423px;width:118px;height:1px;background:#FFFFFF;"></div>
<div style="left:840px;top:400px;width:1px;height:24px;background:#FFFFFF;"></div>
<div style="left:723px;top:400px;width:117px;height:1px;background:#848284;"></div>
<div style="left:723px;top:400px;width:1px;height:23px;background:#848284;"></div>
<div style="left:724px;top:401px;width:115px;height:1px;background:#FFFFFF;"></div>
<div style="left:724px;top:401px;width:1px;height:21px;background:#FFFFFF;"></div>
<div style="left:724px;top:422px;width:116px;height:1px;background:#848284;"></div>
<div style="left:839px;top:401px;width:1px;height:22px;background:#848284;"></div>
<div class="t" style="top:405px;color:#000;font-size:12.5px;left:723px;width:118px;text-align:center;transform:scaleX(0.855);transform-origin:50% 0;">MAC Telnet</div>
<div style="left:723px;top:426px;width:118px;height:24px;background:#D6D3CE;"></div>
<div style="left:723px;top:449px;width:118px;height:1px;background:#FFFFFF;"></div>
<div style="left:840px;top:426px;width:1px;height:24px;background:#FFFFFF;"></div>
<div style="left:723px;top:426px;width:117px;height:1px;background:#848284;"></div>
<div style="left:723px;top:426px;width:1px;height:23px;background:#848284;"></div>
<div style="left:724px;top:427px;width:115px;height:1px;background:#FFFFFF;"></div>
<div style="left:724px;top:427px;width:1px;height:21px;background:#FFFFFF;"></div>
<div style="left:724px;top:448px;width:116px;height:1px;background:#848284;"></div>
<div style="left:839px;top:427px;width:1px;height:22px;background:#848284;"></div>
<div class="t" style="top:431px;color:#000;font-size:12.5px;left:723px;width:118px;text-align:center;transform:scaleX(0.855);transform-origin:50% 0;">Torch</div>
<div style="left:259px;top:638px;width:582px;height:1px;background:#848284;"></div>
</body></html>
